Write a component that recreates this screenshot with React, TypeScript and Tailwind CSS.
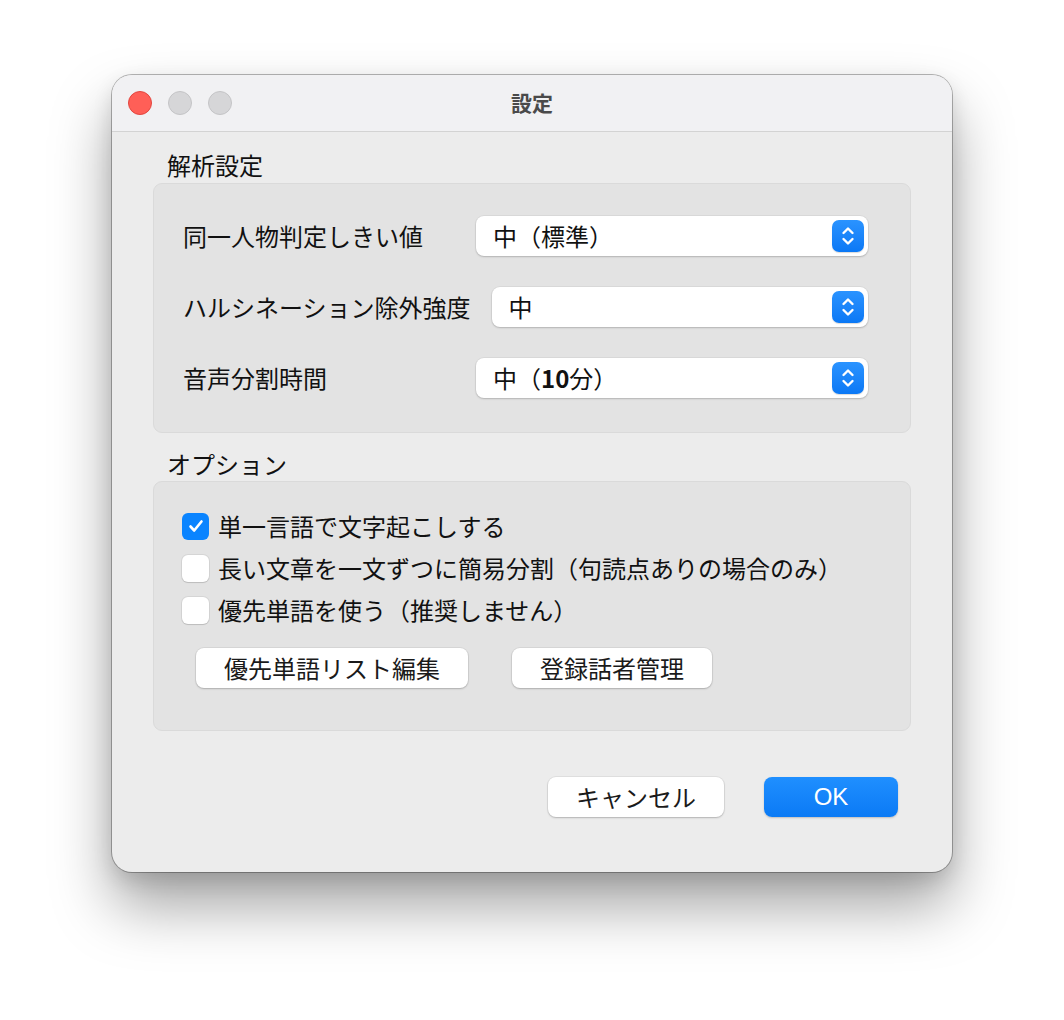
const FONT = { fontFamily: '"Noto Sans CJK JP", "Noto Sans", sans-serif' };

const SELECTS = [
  { label: "同一人物判定しきい値", value: <>中（標準）</> },
  { label: "ハルシネーション除外強度", value: <>中</> },
  { label: "音声分割時間", value: <>中（<span className="font-semibold">10</span>分）</> },
];

const OPTIONS = [
  { label: "単一言語で文字起こしする", checked: true },
  { label: "長い文章を一文ずつに簡易分割（句読点ありの場合のみ）", checked: false },
  { label: "優先単語を使う（推奨しません）", checked: false },
];

function Stepper() {
  return (
    <div className="w-[32px] h-[32px] rounded-[7px] bg-gradient-to-b from-[#2a93ff] to-[#0a78f5] flex items-center justify-center shadow-[0_1px_1px_rgba(0,0,0,0.15)]">
      <svg width="16" height="26" viewBox="0 0 16 26" fill="none">
        <path d="M3.5 10 L8 5.5 L12.5 10" stroke="white" strokeWidth="2.4" strokeLinecap="round" strokeLinejoin="round" />
        <path d="M3.5 16 L8 20.5 L12.5 16" stroke="white" strokeWidth="2.4" strokeLinecap="round" strokeLinejoin="round" />
      </svg>
    </div>
  );
}

function Checkbox({ checked }: { checked: boolean }) {
  if (checked) {
    return (
      <div className="w-[27px] h-[27px] rounded-[6px] bg-[#0a84ff] flex items-center justify-center shrink-0">
        <svg width="18" height="18" viewBox="0 0 18 18" fill="none">
          <path d="M3.5 9.5 L7.2 13.5 L14.5 4.5" stroke="white" strokeWidth="2.6" strokeLinecap="round" strokeLinejoin="round" />
        </svg>
      </div>
    );
  }
  return (
    <div className="w-[27px] h-[27px] rounded-[6px] bg-white shrink-0 shadow-[0_0_0_1px_rgba(0,0,0,0.06),0_1px_1px_rgba(0,0,0,0.12)]" />
  );
}

function PushButton({ children, w }: { children: React.ReactNode; w: string }) {
  return (
    <button
      type="button"
      className={`${w} h-[40px] rounded-[8px] bg-white text-[24px] text-[#1a1a1a] flex items-center justify-center shadow-[0_0_0_1px_rgba(0,0,0,0.05),0_1px_2px_rgba(0,0,0,0.2)]`}
    >
      {children}
    </button>
  );
}

export default function App() {
  return (
    <div className="min-h-[1020px] w-full bg-white pt-[75px] pl-[112px]" style={FONT}>
      {/* window */}
      <div className="w-[840px] h-[797px] rounded-[20px] overflow-hidden bg-[#ececec] flex flex-col shadow-[0_0_0_1px_rgba(0,0,0,0.28),0_34px_60px_rgba(0,0,0,0.36),0_8px_20px_rgba(0,0,0,0.12)]">
        {/* title bar */}
        <div className="h-[57px] shrink-0 bg-[#f1f1f3] border-b border-[#d3d3d3] flex items-center relative">
          <div className="flex items-center gap-[16px] pl-[16px]">
            <div className="w-[24px] h-[24px] rounded-full bg-[#ff5f57] border border-[#e2463f]" />
            <div className="w-[24px] h-[24px] rounded-full bg-[#d6d6d8] border border-[#c4c4c6]" />
            <div className="w-[24px] h-[24px] rounded-full bg-[#d6d6d8] border border-[#c4c4c6]" />
          </div>
          <div className="absolute inset-0 flex items-center justify-center text-[21px] font-bold text-[#4a4a4a] pointer-events-none">
            設定
          </div>
        </div>

        {/* body */}
        <div className="flex-1 pl-[41px] pr-[41px] pt-[17px] flex flex-col">
          <div className="pl-[14px] text-[24px] leading-[32px] text-[#111]">解析設定</div>
          <div className="mt-[2px] h-[250px] rounded-[9px] bg-[#e3e3e3] border border-[#dadada] pt-[32px] pl-[29px] pr-[42px] flex flex-col gap-[32px]">
            {SELECTS.map(({ label, value }) => (
              <div key={label} className="flex items-center gap-[21px] h-[39px]">
                <span className="min-w-[272px] text-[24px] text-[#111] whitespace-nowrap">{label}</span>
                <div className="flex-1 h-[40px] rounded-[8px] bg-white flex items-center justify-between pl-[17px] pr-[4px] shadow-[0_0_0_1px_rgba(0,0,0,0.04),0_1px_2px_rgba(0,0,0,0.18)]">
                  <span className="text-[24px] text-[#111]">{value}</span>
                  <Stepper />
                </div>
              </div>
            ))}
          </div>

          <div className="mt-[15px] pl-[14px] text-[24px] leading-[32px] text-[#111]">オプション</div>
          <div className="mt-[1px] h-[250px] rounded-[9px] bg-[#e3e3e3] border border-[#dadada] pt-[23px] pl-[28px] flex flex-col">
            {OPTIONS.map(({ label, checked }) => (
              <div key={label} className="flex items-center gap-[9px] h-[42px]">
                <Checkbox checked={checked} />
                <span className="text-[24px] text-[#111] whitespace-nowrap">{label}</span>
              </div>
            ))}
            <div className="flex gap-[44px] mt-[17px] pl-[14px]">
              <PushButton w="w-[272px]">優先単語リスト編集</PushButton>
              <PushButton w="w-[200px]">登録話者管理</PushButton>
            </div>
          </div>

          <div className="flex justify-end gap-[40px] mt-[46px] pr-[13px]">
            <PushButton w="w-[176px]">キャンセル</PushButton>
            <button
              type="button"
              className="w-[134px] h-[40px] rounded-[8px] bg-gradient-to-b from-[#1f8fff] to-[#0a7af5] text-white text-[24px] flex items-center justify-center shadow-[0_1px_2px_rgba(0,0,0,0.2)]"
              style={{ fontFamily: '"Liberation Sans", "Noto Sans CJK JP", sans-serif' }}
            >
              OK
            </button>
          </div>
        </div>
      </div>
    </div>
  );
}
